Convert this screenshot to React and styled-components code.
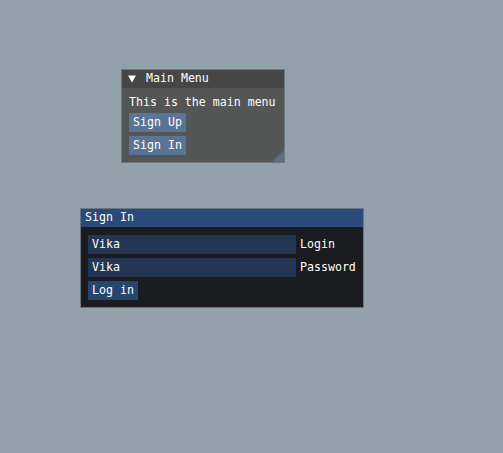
import React from 'react';
import styled, { createGlobalStyle } from 'styled-components';

const Global = createGlobalStyle`
  html, body {
    margin: 0;
    padding: 0;
    background: #93a2aa;
  }
  body {
    width: 503px;
    height: 453px;
    overflow: hidden;
    font-family: "DejaVu Sans Mono", "Liberation Mono", monospace;
    -webkit-font-smoothing: none;
  }
`;

const Desktop = styled.div`
  position: relative;
  width: 503px;
  height: 453px;
`;

const Window = styled.section`
  position: absolute;
  left: ${p => p.$x}px;
  top: ${p => p.$y}px;
  width: ${p => p.$w}px;
  background: ${p => p.$bg};
  display: flex;
  flex-direction: column;
  &::after {
    content: '';
    position: absolute;
    inset: 0;
    border: 1px solid ${p => p.$border};
    pointer-events: none;
  }
`;

const TitleBar = styled.header`
  height: 19px;
  box-sizing: border-box;
  display: flex;
  align-items: center;
  padding-left: ${p => p.$pad}px;
  background: ${p => p.$bg};
  color: #ffffff;
  font-size: 11.6px;
  line-height: 13px;
  white-space: pre;
`;

const Arrow = styled.svg`
  width: 8px;
  height: 8px;
  margin-right: 10px;
  flex: none;
`;

const Body = styled.div`
  padding: 8px;
  display: flex;
  flex-direction: column;
  align-items: flex-start;
  gap: 4px;
`;

const Text = styled.div`
  height: 13px;
  font-size: 11.6px;
  line-height: 13px;
  color: #ffffff;
  white-space: pre;
`;

const Button = styled.button`
  all: unset;
  box-sizing: border-box;
  height: 19px;
  padding: 3px 4px;
  font-family: "DejaVu Sans Mono", "Liberation Mono", monospace;
  font-size: 11.6px;
  line-height: 13px;
  color: #ffffff;
  white-space: pre;
  background: ${p => p.$bg};
`;

const Row = styled.div`
  display: flex;
  align-items: center;
  gap: 4px;
`;

const Input = styled.div`
  box-sizing: border-box;
  width: 208px;
  height: 19px;
  padding: 3px 4px;
  font-size: 11.6px;
  line-height: 13px;
  color: #ffffff;
  background: #243654;
  white-space: pre;
`;

const Grip = styled.svg`
  position: absolute;
  right: 1px;
  bottom: 1px;
  width: 12px;
  height: 12px;
`;

export default function App() {
  return (
    <>
      <Global />
      <Desktop>
        <Window $x={121} $y={69} $w={164} $bg="#545555" $border="#6f767b">
          <TitleBar $pad={7} $bg="#464646">
            <Arrow viewBox="0 0 8 8">
              <polygon points="0,0.5 8,0.5 4,7.5" fill="#ffffff" />
            </Arrow>
            Main Menu
          </TitleBar>
          <Body>
            <Text>This is the main menu</Text>
            <Button $bg="#5a7495">Sign Up</Button>
            <Button $bg="#5a7495">Sign In</Button>
          </Body>
          <Grip viewBox="0 0 12 12">
            <polygon points="12,0 12,12 0,12" fill="#5f6d7e" />
          </Grip>
        </Window>

        <Window $x={80} $y={208} $w={284} $bg="#1b1c1f" $border="#6b7580">
          <TitleBar $pad={5} $bg="#294a7b">Sign In</TitleBar>
          <Body>
            <Row>
              <Input>Vika</Input>
              <Text>Login</Text>
            </Row>
            <Row>
              <Input>Vika</Input>
              <Text>Password</Text>
            </Row>
            <Button $bg="#27466e">Log in</Button>
          </Body>
        </Window>
      </Desktop>
    </>
  );
}
